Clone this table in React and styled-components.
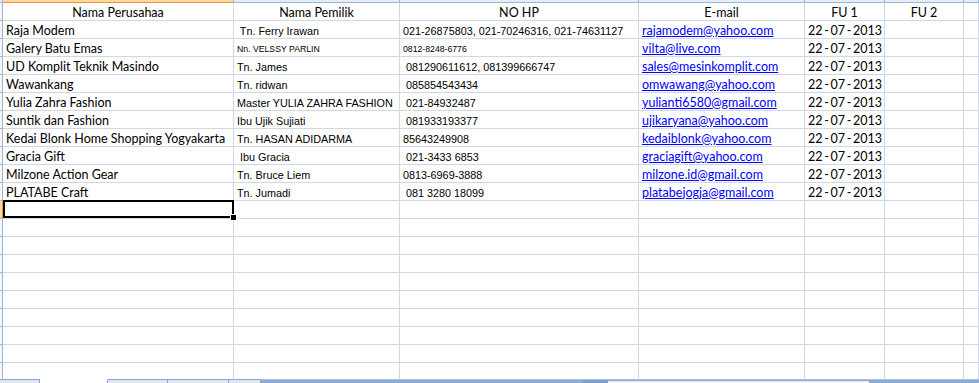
import React from 'react';
import styled, { createGlobalStyle, css } from 'styled-components';

const GRID = '#d0d7e5';
const HEAD_LINE = '#9eb6ce';
const CALIBRI = `'Lato', 'Liberation Sans', sans-serif`;
const ARIAL = `'Liberation Sans', Arial, sans-serif`;

const GlobalStyle = createGlobalStyle`
    html, body {
        margin: 0;
        padding: 0;
        background: #ffffff;
        overflow: hidden;
    }
`;

const Sheet = styled.div`
    display: flex;
    flex-direction: column;
    width: 100vw;
    height: 100vh;
    overflow: hidden;
    background: #ffffff;
`;

const HeaderStrip = styled.div`
    display: flex;
    flex: none;
    height: 3px;
`;

const StripCorner = styled.div`
    flex: none;
    width: 3px;
    box-sizing: border-box;
    background: #e4ecf7;
    border-right: 1px solid ${HEAD_LINE};
    border-bottom: 1px solid ${HEAD_LINE};
`;

const StripCell = styled.div`
    box-sizing: border-box;
    flex: ${p => (p.$w ? `0 0 ${p.$w}px` : '1 1 auto')};
    background: ${p => (p.$active ? '#f9d99f' : '#e4ecf7')};
    border-right: 1px solid ${HEAD_LINE};
    border-bottom: 1px solid ${p => (p.$active ? '#f29436' : HEAD_LINE)};
`;

const Grid = styled.div`
    flex: 1 1 auto;
    overflow: hidden;
`;

const Row = styled.div`
    display: flex;
    height: 18px;
`;

const RowHead = styled.div`
    flex: none;
    width: 3px;
    box-sizing: border-box;
    background: ${p => (p.$active ? '#f9d99f' : '#f3f6fb')};
    border-right: 1px solid ${p => (p.$active ? '#f29436' : HEAD_LINE)};
    border-bottom: 1px solid ${HEAD_LINE};
`;

const Cell = styled.div`
    box-sizing: border-box;
    flex: ${p => (p.$w ? `0 0 ${p.$w}px` : '1 1 auto')};
    height: 18px;
    display: flex;
    align-items: flex-end;
    justify-content: ${p => (p.$center ? 'center' : 'flex-start')};
    padding: 0 0 ${p => (p.$small ? 2 : 1)}px ${p => (p.$center ? 0 : 3)}px;
    border-right: 1px solid ${GRID};
    border-bottom: 1px solid ${GRID};
    white-space: pre;
    color: #000000;
    line-height: 1;
    ${p => p.$arial
        ? css`
            font-family: ${ARIAL};
            font-size: ${p.$small ? 8.7 : 10.8}px;
        `
        : css`
            font-family: ${CALIBRI};
            font-size: 12.5px;
        `}
    ${p => p.$date && css`
        word-spacing: -1.5px;
    `}
    ${p => p.$selected && css`
        position: relative;
    `}
`;

const Mail = styled.a`
    color: #0000ff;
    text-decoration: underline;
    text-underline-offset: 1px;
`;

const Selection = styled.div`
    position: absolute;
    top: -1px;
    left: 0;
    right: -1px;
    bottom: 0;
    border: 2px solid #000000;
    z-index: 2;

    &::after {
        content: '';
        position: absolute;
        right: -5px;
        bottom: -5px;
        width: 5px;
        height: 5px;
        background: #000000;
        border: 1px solid #ffffff;
    }
`;

const TabBar = styled.div`
    display: flex;
    flex: none;
    height: 4px;
    background: #8eabd6;
    border-top: 1px solid #a9c0e2;
    box-sizing: border-box;
`;

const Tab = styled.div`
    flex: 0 0 ${p => p.$w}px;
    box-sizing: border-box;
    margin-top: -1px;
    background: ${p => (p.$active ? '#ffffff' : '#dde6f3')};
    border-top: 1px solid ${p => (p.$active ? '#ffffff' : '#8ca6cc')};
    border-right: 1px solid #8ca6cc;
`;

const Track = styled.div`
    flex: 0 0 ${p => p.$w}px;
    background: ${p => p.$dark ? '#7f9fcf' : 'transparent'};
`;

const Thumb = styled.div`
    flex: 0 0 263px;
    box-sizing: border-box;
    background: #eef1f6;
    border: 1px solid #8aa5cf;
    border-bottom: none;
`;

const WIDTHS = [231, 166, 239, 166, 80, 79, null];

const HEAD = ['Nama Perusahaa', 'Nama Pemilik', 'NO HP', 'E-mail', 'FU 1', 'FU 2', ''];

const DATA = [
    { a: 'Raja Modem', b: ' Tn. Ferry Irawan', c: '021-26875803, 021-70246316, 021-74631127', d: 'rajamodem@yahoo.com' },
    { a: 'Galery Batu Emas', b: 'Nn. VELSSY PARLIN', c: '0812-8248-6776', d: 'vilta@live.com', small: true },
    { a: 'UD Komplit Teknik Masindo', b: 'Tn. James', c: ' 081290611612, 081399666747', d: 'sales@mesinkomplit.com' },
    { a: 'Wawankang', b: 'Tn. ridwan', c: ' 085854543434', d: 'omwawang@yahoo.com' },
    { a: 'Yulia Zahra Fashion', b: 'Master YULIA ZAHRA FASHION', c: ' 021-84932487', d: 'yulianti6580@gmail.com' },
    { a: 'Suntik dan Fashion', b: 'Ibu Ujik Sujiati', c: ' 081933193377', d: 'ujikaryana@yahoo.com' },
    { a: 'Kedai Blonk Home Shopping Yogyakarta', b: 'Tn. HASAN ADIDARMA', c: '85643249908', d: 'kedaiblonk@yahoo.com' },
    { a: 'Gracia Gift', b: ' Ibu Gracia', c: ' 021-3433 6853', d: 'graciagift@yahoo.com' },
    { a: 'Milzone Action Gear', b: 'Tn. Bruce Liem', c: '0813-6969-3888', d: 'milzone.id@gmail.com' },
    { a: 'PLATABE Craft', b: 'Tn. Jumadi', c: ' 081 3280 18099', d: 'platabejogja@gmail.com' },
];

const EMPTY_ROWS = 10;

function DataRow({ row }) {
    return (
        <Row>
            <RowHead />
            <Cell $w={WIDTHS[0]}>{row.a}</Cell>
            <Cell $w={WIDTHS[1]} $arial $small={row.small}>{row.b}</Cell>
            <Cell $w={WIDTHS[2]} $arial $small={row.small}>{row.c}</Cell>
            <Cell $w={WIDTHS[3]}><Mail href={`mailto:${row.d}`}>{row.d}</Mail></Cell>
            <Cell $w={WIDTHS[4]} $date>22 - 07 - 2013</Cell>
            <Cell $w={WIDTHS[5]} />
            <Cell />
        </Row>
    );
}

export default function App() {
    return (
        <Sheet>
            <GlobalStyle />
            <HeaderStrip>
                <StripCorner />
                {WIDTHS.map((w, i) => (
                    <StripCell key={i} $w={w} $active={i === 0} />
                ))}
            </HeaderStrip>

            <Grid>
                <Row>
                    <RowHead />
                    {HEAD.map((h, i) => (
                        <Cell key={i} $w={WIDTHS[i]} $center>{h}</Cell>
                    ))}
                </Row>

                {DATA.map((row, i) => (
                    <DataRow key={i} row={row} />
                ))}

                {Array.from({ length: EMPTY_ROWS }).map((_, r) => (
                    <Row key={r}>
                        <RowHead $active={r === 0} />
                        {WIDTHS.map((w, i) => (
                            <Cell key={i} $w={w} $selected={r === 0 && i === 0}>
                                {r === 0 && i === 0 && <Selection />}
                            </Cell>
                        ))}
                    </Row>
                ))}
            </Grid>

            <TabBar>
                <Tab $w={40} />
                <Tab $w={68} $active />
                <Tab $w={60} />
                <Tab $w={61} />
                <Tab $w={32} />
                <Track $w={322} />
                <Track $w={24} $dark />
                <Thumb />
            </TabBar>
        </Sheet>
    );
}
